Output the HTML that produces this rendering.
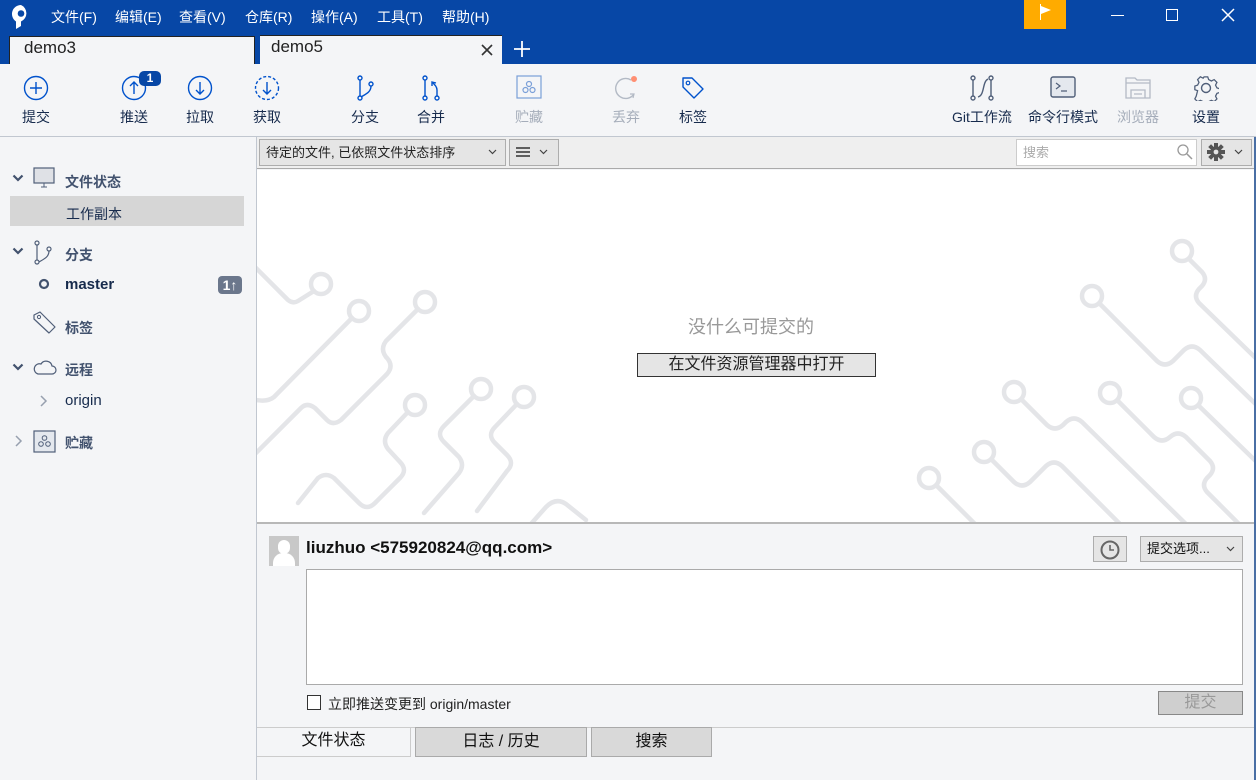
<!DOCTYPE html>
<html><head><meta charset="utf-8"><style>
*{margin:0;padding:0;box-sizing:border-box}
body{width:1256px;height:780px;overflow:hidden;position:relative;background:#f4f5f7;font-family:"Liberation Sans","Noto Sans CJK SC",sans-serif;color:#172b4d}
.a{position:absolute}
.menu span{position:absolute;top:7px;color:#fff;font-size:14px}
.tb{position:absolute;top:75px;width:60px;text-align:center;font-size:14px;color:#172b4d}
.tb svg{display:block;margin:0 auto 6px}
.tb div{white-space:nowrap}
.side{font-size:14px;color:#42526e}
.dd{position:absolute}
</style></head><body>
<div class="a" style="left:0;top:0;width:1256px;height:64px;background:#0747a6"></div>
<svg class="a" style="left:10px;top:4px" width="22" height="26" viewBox="0 0 22 26"><path d="M11 1a9 9 0 0 0-5 16.5V25l5-3v-4.5A9 9 0 0 0 11 1z" fill="#fff"/><circle cx="11" cy="9.5" r="3.3" fill="#0747a6"/></svg>
<div class="menu"><span style="left:51px">文件(F)</span><span style="left:115px">编辑(E)</span><span style="left:179px">查看(V)</span><span style="left:245px">仓库(R)</span><span style="left:311px">操作(A)</span><span style="left:377px">工具(T)</span><span style="left:442px">帮助(H)</span></div>
<div class="a" style="left:1024px;top:0;width:42px;height:29px;background:#ffab00"></div>
<svg class="a" style="left:1036px;top:3px" width="20" height="18"><line x1="4.5" y1="1" x2="4.5" y2="17" stroke="#fff"/><path d="M5 3l10 4-10 4z" fill="#fff"/></svg>
<div class="a" style="left:1111px;top:15px;width:13px;height:1px;background:#fff"></div>
<div class="a" style="left:1166px;top:9px;width:12px;height:12px;border:1.5px solid #fff"></div>
<svg class="a" style="left:1221px;top:8px" width="14" height="14"><path d="M1 1l12 12M13 1L1 13" stroke="#fff" stroke-width="1.5"/></svg>
<div class="a" style="left:9px;top:36px;width:246px;height:28px;background:#f4f5f7;border:1px solid #222;border-bottom:none"></div>
<div class="a" style="left:24px;top:38px;font-size:17px;color:#222">demo3</div>
<div class="a" style="left:260px;top:35px;width:242px;height:30px;background:#f4f5f7;border-top:1px solid #222"></div>
<div class="a" style="left:271px;top:37px;font-size:17px;color:#222">demo5</div>
<svg class="a" style="left:481px;top:44px" width="12" height="12"><path d="M1 1l10 10M11 1L1 11" stroke="#333" stroke-width="1.6"/></svg>
<svg class="a" style="left:513px;top:40px" width="18" height="18"><path d="M9 1v16M1 9h16" stroke="#fff" stroke-width="1.8"/></svg>
<div class="tb" style="left:6px"><svg width="26" height="26"><circle cx="13" cy="13" r="11.5" fill="none" stroke="#0052cc" stroke-width="1.4"/><path d="M13 7v12M7 13h12" stroke="#0052cc" stroke-width="1.4"/></svg><div>提交</div></div>
<div class="tb" style="left:104px"><svg width="26" height="26"><circle cx="13" cy="13" r="11.5" fill="none" stroke="#0052cc" stroke-width="1.4"/><path d="M13 19V7M9 11l4-4 4 4" stroke="#0052cc" stroke-width="1.4" fill="none"/></svg><div>推送</div></div>
<div class="a" style="left:139px;top:71px;width:22px;height:15px;background:#0747a6;border-radius:5px;color:#fff;font-size:12px;font-weight:bold;text-align:center;line-height:15px">1</div>
<div class="tb" style="left:170px"><svg width="26" height="26"><circle cx="13" cy="13" r="11.5" fill="none" stroke="#0052cc" stroke-width="1.4"/><path d="M13 7v12M9 15l4 4 4-4" stroke="#0052cc" stroke-width="1.4" fill="none"/></svg><div>拉取</div></div>
<div class="tb" style="left:237px"><svg width="26" height="26"><circle cx="13" cy="13" r="11.5" fill="none" stroke="#0052cc" stroke-width="1.4" stroke-dasharray="3 2"/><path d="M13 7v12M9 15l4 4 4-4" stroke="#0052cc" stroke-width="1.4" fill="none"/></svg><div>获取</div></div>
<div class="tb" style="left:335px"><svg width="26" height="26"><g fill="none" stroke="#0052cc" stroke-width="1.4"><circle cx="8" cy="3" r="2"/><circle cx="8" cy="23" r="2"/><circle cx="19" cy="9" r="2"/><path d="M8 5v16M19 11c0 6-5 8-10 11"/></g></svg><div>分支</div></div>
<div class="tb" style="left:401px"><svg width="26" height="26"><g fill="none" stroke="#0052cc" stroke-width="1.4"><circle cx="7" cy="3" r="2"/><circle cx="7" cy="23" r="2"/><circle cx="19" cy="23" r="2"/><path d="M7 5v16M19 21v-6c0-3-2-5-4-7M14 11l0-4 4 1"/></g></svg><div>合并</div></div>
<div class="tb" style="left:499px;color:#a5adba"><svg width="26" height="26"><g fill="none" stroke="#7a9fd8" stroke-width="1.2"><rect x="1" y="1" width="24" height="22"/><circle cx="13" cy="9" r="2.5"/><circle cx="9.5" cy="15" r="2.5"/><circle cx="16.5" cy="15" r="2.5"/></g></svg><div>贮藏</div></div>
<div class="tb" style="left:596px;color:#a5adba"><svg width="26" height="26"><path d="M18 5A10 10 0 1 0 21 19" fill="none" stroke="#b3bac5" stroke-width="1.4"/><path d="M20 23l1-4-4 0" fill="none" stroke="#b3bac5" stroke-width="1.2"/><circle cx="21" cy="4" r="3" fill="#ff8f73"/></svg><div>丢弃</div></div>
<div class="tb" style="left:663px"><svg width="26" height="26"><path d="M3 3h9l11 11-9 9L3 12z" fill="none" stroke="#0052cc" stroke-width="1.4" stroke-linejoin="round"/><circle cx="8" cy="8" r="1.8" fill="none" stroke="#0052cc" stroke-width="1.2"/></svg><div>标签</div></div>
<div class="tb" style="left:948px;width:68px"><svg width="26" height="26"><g fill="none" stroke="#505f79" stroke-width="1.4"><circle cx="4" cy="3" r="2"/><circle cx="4" cy="23" r="2"/><circle cx="22" cy="3" r="2"/><circle cx="22" cy="23" r="2"/><path d="M4 5v16M22 5v16M19 4c-6 3-3 16-10 18"/></g></svg><div>Git工作流</div></div>
<div class="tb" style="left:1025px;width:76px"><svg width="26" height="26"><rect x="1" y="2" width="24" height="20" rx="2" fill="#e4e8ee" stroke="#505f79" stroke-width="1.4"/><path d="M6 8l4 3-4 3M11 16h6" fill="none" stroke="#505f79" stroke-width="1.2"/></svg><div>命令行模式</div></div>
<div class="tb" style="left:1108px;color:#a5adba"><svg width="26" height="26"><g fill="none" stroke="#b3bac5" stroke-width="1.3"><path d="M1 3h9l2 2h13v18H1z"/><path d="M1 8h24M6 23v-8h14v8M9 19h8"/></g></svg><div>浏览器</div></div>
<div class="tb" style="left:1176px"><svg width="26" height="26"><g fill="none" stroke="#505f79" stroke-width="1.4"><path d="M11 1h4l1 3 3 1.5 3-1.5 3 3-1.5 3 1.5 3 3 1v0 4l-3 1-1.5 3 1.5 3-3 3-3-1.5-3 1.5-1 3h-4l-1-3-3-1.5-3 1.5-3-3 1.5-3L4 16l-3-1v-4l3-1 1.5-3L4 4l3-3 3 1.5z" transform="scale(.92) translate(1 1)"/><circle cx="13" cy="13" r="4.5"/></g></svg><div>设置</div></div>
<div class="a" style="left:0;top:136px;width:1256px;height:1px;background:#c1c7d0"></div>
<div class="a" style="left:256px;top:137px;width:1px;height:643px;background:#c1c7d0"></div>
<svg class="a" style="left:12px;top:174px" width="12" height="9"><path d="M1.5 1.5l4.5 4.5 4.5-4.5" fill="none" stroke="#42526e" stroke-width="2.2"/></svg>
<svg class="a" style="left:33px;top:167px" width="22" height="22"><rect x="1" y="1" width="20" height="15" fill="#dfe1e6" stroke="#505f79" stroke-width="1.2"/><path d="M8 20h6M11 16v4" stroke="#505f79"/></svg>
<div class="a side" style="left:65px;top:172px;font-weight:bold">文件状态</div>
<div class="a" style="left:10px;top:196px;width:234px;height:30px;background:#d6d6d6"></div>
<div class="a side" style="left:66px;top:204px;color:#172b4d">工作副本</div>
<svg class="a" style="left:12px;top:247px" width="12" height="9"><path d="M1.5 1.5l4.5 4.5 4.5-4.5" fill="none" stroke="#42526e" stroke-width="2.2"/></svg>
<svg class="a" style="left:33px;top:240px" width="20" height="26"><g fill="none" stroke="#505f79" stroke-width="1.2"><circle cx="4" cy="3" r="2"/><circle cx="4" cy="22" r="2"/><circle cx="16" cy="9" r="2"/><path d="M4 5v15M16 11c0 6-5 8-10 11"/></g></svg>
<div class="a side" style="left:65px;top:245px;font-weight:bold">分支</div>
<svg class="a" style="left:38px;top:278px" width="12" height="12"><circle cx="6" cy="6" r="4" fill="none" stroke="#42526e" stroke-width="2.2"/></svg>
<div class="a" style="left:65px;top:276px;font-size:15px;font-weight:bold;color:#172b4d">master</div>
<div class="a" style="left:218px;top:276px;width:24px;height:18px;background:#6b778c;border-radius:4px;color:#fff;font-size:14px;font-weight:bold;text-align:center;line-height:18px">1↑</div>
<svg class="a" style="left:32px;top:311px" width="24" height="24"><path d="M2 4l6-3 15 15-6 6L2 8z" fill="none" stroke="#505f79" stroke-width="1.2" stroke-linejoin="round"/><circle cx="7" cy="6" r="1.6" fill="none" stroke="#505f79"/></svg>
<div class="a side" style="left:65px;top:318px;font-weight:bold">标签</div>
<svg class="a" style="left:12px;top:363px" width="12" height="9"><path d="M1.5 1.5l4.5 4.5 4.5-4.5" fill="none" stroke="#42526e" stroke-width="2.2"/></svg>
<svg class="a" style="left:33px;top:358px" width="24" height="18"><path d="M5 16h14a4 4 0 0 0 0-8 6 6 0 0 0-11-2 5 5 0 0 0-3 10z" fill="none" stroke="#505f79" stroke-width="1.2"/></svg>
<div class="a side" style="left:65px;top:360px;font-weight:bold">远程</div>
<svg class="a" style="left:40px;top:395px" width="8" height="12"><path d="M1 1l5 5-5 5" fill="none" stroke="#97a0af" stroke-width="1.5"/></svg>
<div class="a" style="left:65px;top:392px;font-size:15px;color:#172b4d">origin</div>
<svg class="a" style="left:15px;top:435px" width="8" height="12"><path d="M1 1l5 5-5 5" fill="none" stroke="#97a0af" stroke-width="1.5"/></svg>
<svg class="a" style="left:33px;top:430px" width="24" height="23"><rect x="1" y="1" width="21" height="21" fill="#e4e8ee" stroke="#505f79" stroke-width="1.2"/><g fill="none" stroke="#505f79"><circle cx="11.5" cy="8" r="2.3"/><circle cx="8" cy="14" r="2.3"/><circle cx="15" cy="14" r="2.3"/></g></svg>
<div class="a side" style="left:65px;top:433px;font-weight:bold">贮藏</div>
<div class="a" style="left:257px;top:137px;width:999px;height:32px;background:#efefef;border-bottom:1px solid #aaa"></div>
<div class="a" style="left:259px;top:139px;width:247px;height:27px;background:#e5e5e5;border:1px solid #adadad;font-size:13px;line-height:25px;padding-left:6px;color:#222">待定的文件, 已依照文件状态排序</div>
<svg class="dd" style="left:488px;top:149px" width="9" height="6"><path d="M1 1l3.5 3.5L8 1" fill="none" stroke="#444" stroke-width="1.2"/></svg>
<div class="a" style="left:509px;top:139px;width:50px;height:27px;background:#e5e5e5;border:1px solid #adadad"></div>
<svg class="a" style="left:516px;top:147px" width="14" height="12"><path d="M0 1h14M0 5h14M0 9h14" stroke="#333" stroke-width="1.6"/></svg>
<svg class="dd" style="left:539px;top:149px" width="9" height="6"><path d="M1 1l3.5 3.5L8 1" fill="none" stroke="#444" stroke-width="1.2"/></svg>
<div class="a" style="left:1016px;top:139px;width:181px;height:27px;background:#fff;border:1px solid #ccc;font-size:13px;color:#aaa;line-height:25px;padding-left:6px">搜索</div>
<svg class="a" style="left:1176px;top:143px" width="17" height="17"><circle cx="7" cy="7" r="5" fill="none" stroke="#999" stroke-width="1.3"/><path d="M11 11l5 5" stroke="#999" stroke-width="1.5"/></svg>
<div class="a" style="left:1201px;top:139px;width:51px;height:27px;background:#e5e5e5;border:1px solid #adadad"></div>
<svg class="a" style="left:1207px;top:143px" width="18" height="18"><g transform="translate(9 9)" fill="#555"><circle r="5.5"/><g><rect x="-2" y="-9" width="4" height="18"/><rect x="-2" y="-9" width="4" height="18" transform="rotate(45)"/><rect x="-2" y="-9" width="4" height="18" transform="rotate(90)"/><rect x="-2" y="-9" width="4" height="18" transform="rotate(135)"/></g><circle r="2.4" fill="#e5e5e5"/></g></svg>
<svg class="dd" style="left:1234px;top:149px" width="9" height="6"><path d="M1 1l3.5 3.5L8 1" fill="none" stroke="#444" stroke-width="1.2"/></svg>
<div class="a" style="left:257px;top:170px;width:998px;height:352px;background:#fff;overflow:hidden">
<svg width="998" height="352" style="position:absolute;left:0;top:0"><g transform="translate(-257 -170)" fill="none" stroke="#e4e5e8" stroke-width="4.5" stroke-linecap="round" stroke-linejoin="round">
<circle cx="321" cy="284" r="10"/><path d="M250 262l38 38q5 4 10 1l16-10"/>
<circle cx="359" cy="311" r="10"/><path d="M352 318l-78 79q-6 5-18 3"/>
<circle cx="425" cy="302" r="10"/><path d="M418 309l-32 32q-6 8 0 16l1 1q7 8 0 16l-46 46q-8 6-14 0l-12-12q-8-6-14 0l-56 56"/>
<circle cx="415" cy="405" r="10"/><path d="M408 412l-20 21q-6 8 0 16l12 13q8 8 0 16l-25 25q-8 8-16 0l-25-25q-8-6-16 0l-20 25"/>
<circle cx="481" cy="389" r="10"/><path d="M474 396l-30 30q-8 8 0 16l15 15q6 8 0 16l-35 40"/>
<circle cx="524" cy="397" r="10"/><path d="M517 404l-22 23q-8 8 0 16l12 12q8 8 0 16l-30 40"/>
<path d="M530 525l16-18q10-10 20-3l20 16"/>
<circle cx="1182" cy="251" r="10"/><path d="M1189 259l13 13q6 7 0 14l-3 3q-6 7 0 14l70 68"/>
<circle cx="1092" cy="296" r="10"/><path d="M1100 304l57 57q8 7 16 0l11-11q8-7 16 0l70 68"/>
<circle cx="1014" cy="392" r="10"/><path d="M1022 400l25 25q8 7 16 0l3-3q8-7 16 0l110 108"/>
<circle cx="1110" cy="393" r="10"/><path d="M1118 401l36 36q8 7 16 0l0 0q8-7 16 0l24 24q6 7 0 14l-3 3q-6 7 0 14l40 40"/>
<circle cx="1191" cy="398" r="10"/><path d="M1199 406l70 68"/>
<circle cx="984" cy="452" r="10"/><path d="M992 460l22 22q8 7 16 0l16-16q8-7 16 0l60 60"/>
<circle cx="929" cy="478" r="10"/><path d="M937 486l40 40"/>
</g></svg>
</div>
<div class="a" style="left:688px;top:313px;font-size:18px;color:#999">没什么可提交的</div>
<div class="a" style="left:637px;top:353px;width:239px;height:24px;background:#e5e5e5;border:1px solid #333;font-size:16px;text-align:center;line-height:22px;color:#222">在文件资源管理器中打开</div>
<div class="a" style="left:257px;top:522px;width:999px;height:2px;background:#b8b8b8"></div>
<div class="a" style="left:269px;top:536px;width:30px;height:30px;background:#c8c8c8;overflow:hidden"><div style="position:absolute;left:9px;top:4px;width:12px;height:14px;border-radius:6px;background:#fff"></div><div style="position:absolute;left:4px;top:17px;width:22px;height:20px;border-radius:10px 10px 0 0;background:#fff"></div></div>
<div class="a" style="left:306px;top:538px;font-size:17px;font-weight:bold;color:#111">liuzhuo &lt;575920824@qq.com&gt;</div>
<div class="a" style="left:1093px;top:536px;width:34px;height:26px;background:#e5e5e5;border:1px solid #adadad"></div>
<svg class="a" style="left:1099px;top:539px" width="22" height="22"><circle cx="11" cy="11" r="8.5" fill="none" stroke="#666" stroke-width="2"/><path d="M11 6v5h4" fill="none" stroke="#666" stroke-width="1.6"/></svg>
<div class="a" style="left:1140px;top:536px;width:103px;height:26px;background:#e5e5e5;border:1px solid #adadad;font-size:13px;line-height:24px;padding-left:6px;color:#111">提交选项...</div>
<svg class="dd" style="left:1226px;top:546px" width="9" height="6"><path d="M1 1l3.5 3.5L8 1" fill="none" stroke="#444" stroke-width="1.2"/></svg>
<div class="a" style="left:306px;top:569px;width:937px;height:116px;background:#fff;border:1px solid #aaa"></div>
<div class="a" style="left:307px;top:695px;width:14px;height:15px;border:1px solid #333;background:#fff"></div>
<div class="a" style="left:328px;top:694px;font-size:14px;color:#222">立即推送变更到 origin/master</div>
<div class="a" style="left:1158px;top:691px;width:85px;height:24px;background:#cfcfcf;border:1px solid #888;font-size:16px;text-align:center;line-height:22px;color:#999">提交</div>
<div class="a" style="left:257px;top:727px;width:999px;height:1px;background:#ccc"></div>
<div class="a" style="left:257px;top:727px;width:154px;height:30px;border-right:1px solid #ccc;border-bottom:1px solid #ccc;font-size:16px;text-align:center;line-height:28px;color:#111">文件状态</div>
<div class="a" style="left:415px;top:727px;width:172px;height:30px;background:#d9d9d9;border:1px solid #aaa;font-size:16px;text-align:center;line-height:28px;color:#111">日志 / 历史</div>
<div class="a" style="left:591px;top:727px;width:121px;height:30px;background:#d9d9d9;border:1px solid #aaa;font-size:16px;text-align:center;line-height:28px;color:#111">搜索</div>
<div class="a" style="left:1254px;top:137px;width:2px;height:643px;background:#4a6fa5"></div>
</body></html>
